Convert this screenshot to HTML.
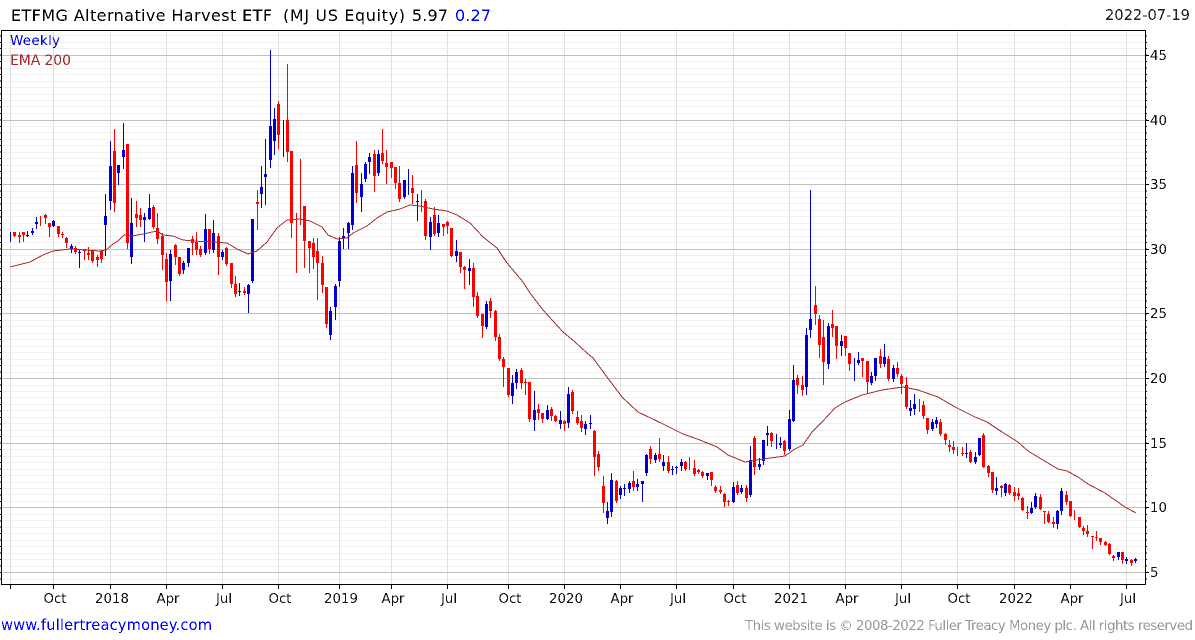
<!DOCTYPE html>
<html><head><meta charset="utf-8"><title>ETFMG Alternative Harvest ETF</title>
<style>
html,body{margin:0;padding:0;background:#fff;width:1195px;height:640px;overflow:hidden}
svg{display:block}
text{font-family:"DejaVu Sans","Liberation Sans",sans-serif}
</style></head><body>
<svg width="1195" height="640" viewBox="0 0 1195 640" xmlns="http://www.w3.org/2000/svg">
<defs>
<filter id="alias" x="0" y="0" width="1195" height="640" filterUnits="userSpaceOnUse" color-interpolation-filters="sRGB">
<feComponentTransfer><feFuncA type="discrete" tableValues="0 1"/></feComponentTransfer>
</filter>
</defs>
<g shape-rendering="crispEdges" fill="none">
<path stroke="#f0f0f0" d="M2 35.5H1145M2 42.5H1145M2 48.5H1145M2 61.5H1145M2 68.5H1145M2 74.5H1145M2 81.5H1145M2 87.5H1145M2 94.5H1145M2 100.5H1145M2 106.5H1145M2 113.5H1145M2 126.5H1145M2 132.5H1145M2 139.5H1145M2 145.5H1145M2 152.5H1145M2 158.5H1145M2 165.5H1145M2 171.5H1145M2 178.5H1145M2 191.5H1145M2 197.5H1145M2 203.5H1145M2 210.5H1145M2 216.5H1145M2 223.5H1145M2 229.5H1145M2 236.5H1145M2 242.5H1145M2 255.5H1145M2 262.5H1145M2 268.5H1145M2 275.5H1145M2 281.5H1145M2 288.5H1145M2 294.5H1145M2 300.5H1145M2 307.5H1145M2 320.5H1145M2 326.5H1145M2 333.5H1145M2 339.5H1145M2 346.5H1145M2 352.5H1145M2 359.5H1145M2 365.5H1145M2 372.5H1145M2 385.5H1145M2 391.5H1145M2 397.5H1145M2 404.5H1145M2 410.5H1145M2 417.5H1145M2 423.5H1145M2 430.5H1145M2 436.5H1145M2 449.5H1145M2 456.5H1145M2 462.5H1145M2 469.5H1145M2 475.5H1145M2 482.5H1145M2 488.5H1145M2 494.5H1145M2 501.5H1145M2 514.5H1145M2 520.5H1145M2 527.5H1145M2 533.5H1145M2 540.5H1145M2 546.5H1145M2 553.5H1145M2 559.5H1145M2 566.5H1145M2 579.5H1145"/>
<path stroke="#e0e0e0" d="M10.5 31V584M53.5 31V584M110.5 31V584M166.5 31V584M222.5 31V584M278.5 31V584M339.5 31V584M391.5 31V584M447.5 31V584M508.5 31V584M564.5 31V584M620.5 31V584M676.5 31V584M733.5 31V584M789.5 31V584M845.5 31V584M901.5 31V584M957.5 31V584M1014.5 31V584M1070.5 31V584M1126.5 31V584"/>
<path stroke="#c0c0c0" d="M2 55.5H1145M2 120.5H1145M2 184.5H1145M2 249.5H1145M2 313.5H1145M2 378.5H1145M2 443.5H1145M2 507.5H1145M2 572.5H1145"/>
<path stroke="#000" d="M1.5 30.5H1145.5V584.5H1.5Z"/>
<path stroke="#000" d="M10.5 584V589M53.5 584V589M110.5 584V589M166.5 584V589M222.5 584V589M278.5 584V589M339.5 584V589M391.5 584V589M447.5 584V589M508.5 584V589M564.5 584V589M620.5 584V589M676.5 584V589M733.5 584V589M789.5 584V589M845.5 584V589M901.5 584V589M957.5 584V589M1014.5 584V589M1070.5 584V589M1126.5 584V589"/>
<path stroke="#000" d="M1146 55.5h3M1146 120.5h3M1146 184.5h3M1146 249.5h3M1146 313.5h3M1146 378.5h3M1146 443.5h3M1146 507.5h3M1146 572.5h3"/>
<line x1="0.5" y1="35.3" x2="0.5" y2="584" stroke="#000" stroke-dasharray="1 5.466"/>
<line x1="1146.5" y1="35.3" x2="1146.5" y2="584" stroke="#000" stroke-dasharray="1 5.466"/>
<!-- red wicks -->
<path stroke="#ff0000" d="M14.5 232V237M19.5 232V243M23.5 232V242M40.5 216V226M45.5 214V224M49.5 223V237M58.5 226V237M62.5 232V238M66.5 237V248M75.5 246V254M84.5 249V260M88.5 247V260M92.5 250V263M97.5 255V267M101.5 250V263M114.5 129V212M127.5 144V249M136.5 201V227M140.5 208V227M153.5 205V229M157.5 213V244M162.5 233V270M166.5 253V301M175.5 244V265M179.5 257V276M192.5 236V255M196.5 232V255M200.5 246V257M209.5 229V254M218.5 233V275M226.5 247V266M231.5 263V288M235.5 276V297M244.5 287V295M257.5 190V230M278.5 101V149M287.5 64V162M291.5 151V238M296.5 213V273M300.5 159V225M304.5 206V268M309.5 241V273M313.5 238V269M317.5 238V300M322.5 256V293M326.5 287V328M356.5 141V203M374.5 150V192M382.5 129V164M386.5 150V184M391.5 162V178M395.5 167V189M399.5 166V202M412.5 175V204M421.5 190V212M425.5 199V240M434.5 207V236M443.5 224V236M447.5 221V234M451.5 228V257M460.5 252V273M464.5 266V289M473.5 263V307M477.5 292V318M482.5 314V338M490.5 298V318M495.5 310V341M499.5 334V361M503.5 357V387M508.5 368V397M521.5 368V389M525.5 379V395M529.5 382V422M538.5 404V420M542.5 413V423M551.5 407V421M555.5 415V422M564.5 420V431M572.5 390V414M577.5 411V425M581.5 415V432M594.5 430V476M598.5 451V471M603.5 476V513M616.5 480V503M633.5 471V491M650.5 446V464M659.5 438V462M668.5 456V473M685.5 461V471M689.5 457V470M694.5 460V476M698.5 469V474M702.5 471V478M711.5 472V486M715.5 485V493M720.5 486V494M724.5 493V507M728.5 500V506M737.5 481V495M746.5 485V502M754.5 436V475M771.5 432V447M784.5 440V455M797.5 375V394M802.5 376V396M815.5 286V325M819.5 315V358M823.5 320V385M832.5 310V337M836.5 326V359M845.5 336V356M849.5 353V371M862.5 358V377M867.5 361V394M880.5 349V368M888.5 356V381M897.5 362V377M901.5 374V394M906.5 377V409M919.5 399V412M923.5 401V419M927.5 418V434M940.5 419V436M945.5 433V445M949.5 440V452M953.5 441V454M957.5 447V456M962.5 447V456M970.5 450V463M983.5 433V468M988.5 465V477M992.5 472V493M1001.5 485V497M1009.5 484V495M1014.5 487V501M1018.5 488V500M1022.5 497V511M1027.5 506V519M1040.5 494V510M1044.5 511V524M1048.5 511V523M1053.5 517V528M1066.5 491V505M1070.5 501V517M1074.5 510V520M1079.5 517V528M1083.5 526V535M1087.5 525V537M1092.5 536V549M1096.5 531V541M1100.5 538V545M1105.5 541V546M1109.5 543V555M1113.5 555V561M1122.5 552V564M1131.5 559V566"/>
<!-- red bodies -->
<path stroke="#ff0000" stroke-width="3" d="M14.5 232V236M19.5 235V237M23.5 232V235M45.5 215V218M49.5 223V227M58.5 226V234M62.5 234V235M66.5 238V243M75.5 248V252M84.5 249V251M88.5 253V255M92.5 251V261M97.5 257V260M101.5 251V259M114.5 151V203M127.5 144V243M136.5 214V218M140.5 215V220M153.5 207V227M157.5 228V239M162.5 236V255M166.5 259V282M175.5 245V257M179.5 257V274M192.5 239V243M196.5 242V250M200.5 249V255M209.5 229V249M218.5 236V257M226.5 248V264M231.5 263V284M235.5 284V294M244.5 291V293M257.5 202V204M278.5 104V135M287.5 120V152M291.5 151V223M304.5 206V241M309.5 241V248M313.5 243V257M317.5 251V263M322.5 263V285M326.5 287V324M356.5 165V193M374.5 154V176M382.5 153V161M386.5 163V167M391.5 162V168M395.5 167V183M399.5 183V199M412.5 188V193M425.5 201V236M434.5 215V234M443.5 224V227M447.5 222V226M451.5 228V256M460.5 252V267M464.5 267V270M473.5 268V297M477.5 296V316M482.5 314V326M490.5 301V311M495.5 311V337M499.5 337V359M503.5 359V367M508.5 368V395M521.5 370V383M525.5 382V383M529.5 382V419M538.5 409V413M542.5 413V419M551.5 409V416M555.5 416V421M564.5 421V424M572.5 392V411M577.5 417V423M581.5 421V428M594.5 431V457M598.5 454V467M603.5 486V503M616.5 481V501M633.5 481V487M650.5 449V459M659.5 454V459M668.5 462V471M685.5 462V469M694.5 468V474M698.5 470V472M702.5 472V476M711.5 472V480M715.5 487V491M720.5 490V492M724.5 494V502M728.5 501V502M737.5 485V493M746.5 488V498M754.5 438V467M771.5 433V441M784.5 441V451M797.5 378V385M802.5 385V390M815.5 305V314M819.5 319V345M823.5 337V362M832.5 324V328M836.5 326V346M845.5 336V348M849.5 353V364M862.5 358V361M867.5 361V382M880.5 356V364M888.5 359V379M897.5 368V374M901.5 376V384M906.5 385V407M923.5 405V416M927.5 418V430M940.5 422V434M945.5 434V440M949.5 445V447M953.5 447V450M962.5 453V454M970.5 452V462M983.5 435V467M988.5 466V473M992.5 472V490M1001.5 486V488M1009.5 485V493M1014.5 492V496M1018.5 493V496M1022.5 498V510M1027.5 512V513M1040.5 497V509M1044.5 511V512M1048.5 514V522M1053.5 522V524M1066.5 495V502M1070.5 501V516M1079.5 517V527M1083.5 528V531M1087.5 531V534M1092.5 536V537M1096.5 537V538M1100.5 538V542M1105.5 542V545M1109.5 544V554M1113.5 556V558M1122.5 552V560M1131.5 560V563"/>
<!-- blue wicks -->
<path stroke="#0000cd" d="M10.5 232V242M27.5 231V237M32.5 228V235M36.5 217V229M53.5 220V227M71.5 244V253M79.5 250V268M105.5 194V256M110.5 141V210M118.5 165V185M123.5 123V169M131.5 198V264M144.5 213V242M149.5 194V220M170.5 250V301M183.5 261V274M188.5 248V267M205.5 214V255M213.5 220V253M222.5 250V260M239.5 283V296M248.5 284V313M252.5 219V283M261.5 166V208M265.5 139V205M270.5 50V168M274.5 108V155M283.5 120V157M330.5 307V340M335.5 284V320M339.5 237V287M343.5 228V249M348.5 222V249M352.5 166V230M361.5 173V212M365.5 162V182M369.5 153V174M378.5 150V176M404.5 180V199M408.5 169V195M417.5 194V221M430.5 217V250M438.5 215V237M456.5 240V262M469.5 259V285M486.5 301V329M512.5 375V404M516.5 369V389M534.5 391V431M547.5 405V420M560.5 411V429M568.5 387V428M585.5 421V435M590.5 415V429M607.5 502V524M611.5 473V517M620.5 486V499M624.5 484V496M629.5 481V493M637.5 479V491M642.5 481V502M646.5 454V476M655.5 453V463M663.5 455V471M672.5 466V475M676.5 466V474M681.5 459V471M707.5 473V480M733.5 482V503M741.5 485V494M750.5 446V497M759.5 458V470M763.5 440V465M767.5 426V446M776.5 434V449M780.5 437V448M789.5 410V451M793.5 365V422M806.5 328V395M810.5 190V338M828.5 323V369M841.5 335V356M854.5 358V381M858.5 352V365M871.5 372V385M875.5 358V381M884.5 344V367M893.5 365V382M910.5 400V416M914.5 394V415M932.5 419V431M936.5 417V428M966.5 443V458M975.5 452V464M979.5 438V456M996.5 477V495M1005.5 483V496M1031.5 502V514M1035.5 493V509M1057.5 510V529M1061.5 488V515M1118.5 552V560M1126.5 557V564M1135.5 558V563"/>
<!-- blue bodies -->
<path stroke="#0000cd" stroke-width="3" d="M27.5 235V236M32.5 231V233M36.5 222V224M53.5 221V226M71.5 246V249M79.5 252V253M105.5 216V225M110.5 166V201M118.5 165V173M123.5 150V157M131.5 223V257M144.5 217V220M149.5 208V219M170.5 254V281M183.5 263V270M188.5 248V263M205.5 229V253M213.5 233V250M222.5 252V257M239.5 291V292M248.5 285V294M252.5 219V281M261.5 187V194M265.5 174V177M270.5 126V160M274.5 119V141M330.5 311V335M335.5 286V307M339.5 241V281M343.5 236V238M348.5 223V233M352.5 173V225M361.5 184V197M365.5 164V179M369.5 157V162M378.5 154V173M404.5 180V197M417.5 201V202M430.5 222V237M438.5 223V233M456.5 251V256M469.5 268V271M486.5 304V327M512.5 383V396M516.5 372V383M534.5 410V420M547.5 410V419M560.5 420V424M568.5 394V423M585.5 424V429M590.5 423V424M607.5 511V518M611.5 480V512M620.5 488V495M624.5 488V489M629.5 483V489M637.5 484V487M642.5 481V484M646.5 455V473M655.5 455V460M663.5 462V466M672.5 469V470M676.5 467V468M681.5 462V466M707.5 473V476M733.5 487V502M741.5 488V492M750.5 460V495M759.5 464V467M763.5 440V461M767.5 433V435M780.5 443V445M789.5 419V449M793.5 380V421M806.5 335V387M810.5 319V330M828.5 326V364M841.5 341V346M858.5 360V363M871.5 376V383M875.5 358V376M884.5 357V364M893.5 368V379M910.5 408V411M914.5 404V409M932.5 422V429M936.5 420V424M966.5 453V454M975.5 457V462M979.5 438V455M996.5 488V491M1005.5 484V493M1031.5 508V513M1035.5 496V507M1057.5 511V524M1061.5 491V511M1118.5 552V557M1126.5 559V561M1135.5 559V561"/>
<polyline fill="none" stroke="#a52a2a" stroke-width="1" points="10,267 30,262 43,255 53,251 70,249 100,251 106,250 113,244 118,241 124,235 132,236 143,234 157,231 163,235 173,236 183,240 193,241 213,242 227,243 237,249 248,254 257,251 267,242 277,228 287,220 300,219 310,221 322,227 328,235 337,239 347,238 353,233 367,226 377,218 387,212 400,209 410,205 420,206 433,209 447,211 457,215 470,223 483,237 497,248 507,263 523,282 530,293 543,310 563,332 575,342 587,353 593,358 607,377 622,397 638,412 663,424 683,434 700,440 717,447 728,455 745,462 763,459 785,456 795,449 803,445 812,432 822,422 835,408 845,402 862,395 882,390 903,387 918,390 938,397 955,407 975,417 987,422 1002,432 1018,442 1028,451 1048,463 1058,469 1067,471 1078,477 1088,484 1105,493 1125,507 1136,513"/>
</g>
<g filter="url(#alias)">
<!-- title -->
<g font-size="16" fill="#000">
<text x="11" y="21" textLength="261">ETFMG Alternative Harvest ETF</text>
<text x="283" y="21" textLength="122">(MJ US Equity)</text>
<text x="412" y="21" textLength="36">5.97</text>
<text x="455" y="21" textLength="36" fill="#0000ff">0.27</text>
</g>
<text x="1105" y="20" font-size="14.67" textLength="85" fill="#222">2022-07-19</text>
<text x="10" y="45" font-size="13.5" textLength="50" fill="#0000e0">Weekly</text>
<text x="10" y="65" font-size="14" textLength="61" fill="#a52a2a">EMA 200</text>
<!-- y labels -->
<g font-size="13.33" fill="#111">
<text x="1150" y="60">45</text><text x="1150" y="125">40</text><text x="1150" y="189">35</text><text x="1150" y="254">30</text><text x="1150" y="318">25</text><text x="1150" y="383">20</text><text x="1150" y="448">15</text><text x="1150" y="512">10</text><text x="1150" y="577">5</text>
</g>
<!-- x labels -->
<g font-size="13.33" fill="#111" text-anchor="middle">
<text x="55" y="603">Oct</text><text x="112" y="603">2018</text><text x="168" y="603">Apr</text><text x="224" y="603">Jul</text><text x="280" y="603">Oct</text><text x="341" y="603">2019</text><text x="393" y="603">Apr</text><text x="449" y="603">Jul</text><text x="510" y="603">Oct</text><text x="566" y="603">2020</text><text x="622" y="603">Apr</text><text x="678" y="603">Jul</text><text x="735" y="603">Oct</text><text x="791" y="603">2021</text><text x="847" y="603">Apr</text><text x="903" y="603">Jul</text><text x="959" y="603">Oct</text><text x="1016" y="603">2022</text><text x="1072" y="603">Apr</text><text x="1128" y="603">Jul</text>
</g>
<!-- footer -->
<text x="1" y="630" font-size="14.67" textLength="211" fill="#0000ff">www.fullertreacymoney.com</text>
<text x="745" y="630" font-size="13.33" textLength="448" fill="#999999">This website is © 2008-2022 Fuller Treacy Money plc. All rights reserved</text>
</g>
</svg>
</body></html>
